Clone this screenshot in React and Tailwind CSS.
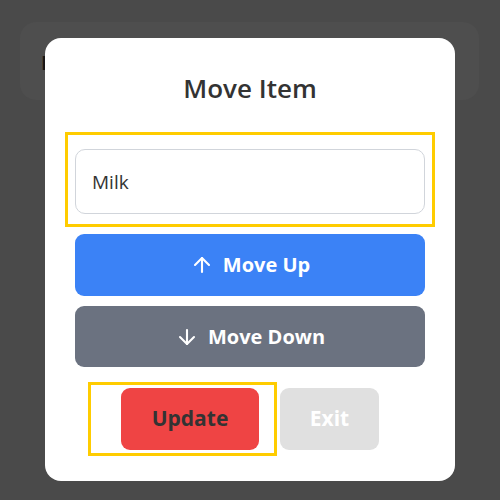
import { ArrowUp, ArrowDown } from 'lucide-react';

const font = { fontFamily: '"Open Sans", "Liberation Sans", sans-serif' };

function Highlight({ className }) {
  return (
    <div className={`pointer-events-none absolute border-[3px] border-[#ffcc00] ${className}`} />
  );
}

export default function App() {
  return (
    <div className="relative h-[500px] w-[500px] overflow-hidden bg-[#4a4a4a]" style={font}>
      {/* page underneath the dimmed overlay */}
      <div className="ml-[20px] mt-[22px] h-[78px] w-[459px] rounded-2xl bg-[#4e4e4e] pl-[21px] pt-[30px]">
        <span className="text-[20px] font-bold leading-none text-[#161616]">My List</span>
      </div>

      {/* modal */}
      <div className="absolute left-[45px] top-[38px] w-[410px] rounded-2xl bg-white px-[30px] pt-[34px] pb-[31px]">
        <h2 className="text-center text-[26px] font-semibold leading-[32px] text-[#333333]">
          Move Item
        </h2>

        <div className="relative mt-[45px]">
          <Highlight className="-left-[10px] -right-[10px] -top-[17px] -bottom-[13px]" />
          <input
            readOnly
            value="Milk"
            className="h-[65px] w-full rounded-[10px] border border-[#d1d5db] px-[16px] text-[19px] text-[#333333] outline-none"
            style={font}
          />
        </div>

        <div className="mt-[20px] flex flex-col gap-[10px]">
          <button className="flex h-[62px] w-full items-center justify-center gap-[9px] rounded-[9px] bg-[#3b82f6] text-[20px] font-bold text-white">
            <ArrowUp size={24} strokeWidth={2.1} />
            Move Up
          </button>
          <button className="flex h-[61px] w-full items-center justify-center gap-[9px] rounded-[9px] bg-[#6b7280] text-[20px] font-bold text-white">
            <ArrowDown size={24} strokeWidth={2.1} />
            Move Down
          </button>
        </div>

        <div className="mt-[21px] flex justify-center gap-[21px]">
          <div className="relative">
            <Highlight className="-left-[33px] -right-[18px] -top-[6px] -bottom-[6px]" />
            <button className="h-[62px] w-[138px] rounded-[9px] bg-[#ef4444] text-[21px] font-bold text-[#333333]">
              Update
            </button>
          </div>
          <button className="h-[62px] w-[99px] rounded-[9px] bg-[#e0e0e0] text-[21px] font-bold text-white">
            Exit
          </button>
        </div>
      </div>
    </div>
  );
}
